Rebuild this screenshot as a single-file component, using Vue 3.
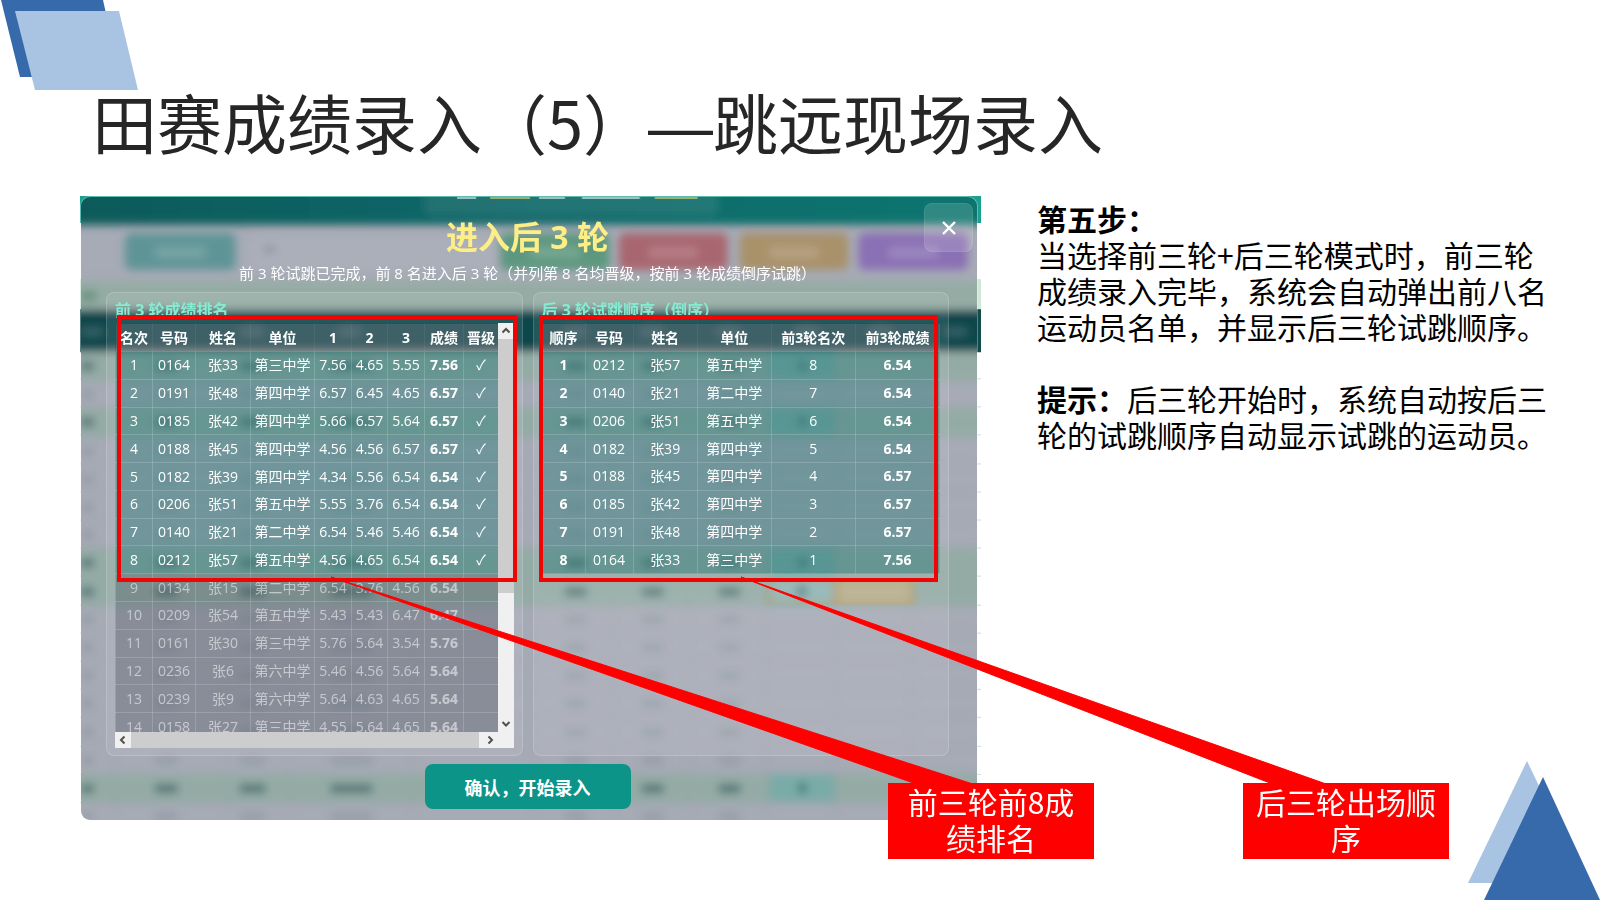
<script setup>
const ranking = [
  [1, '0164', '张33', '第三中学', '7.56', '4.65', '5.55', '7.56'],
  [2, '0191', '张48', '第四中学', '6.57', '6.45', '4.65', '6.57'],
  [3, '0185', '张42', '第四中学', '5.66', '6.57', '5.64', '6.57'],
  [4, '0188', '张45', '第四中学', '4.56', '4.56', '6.57', '6.57'],
  [5, '0182', '张39', '第四中学', '4.34', '5.56', '6.54', '6.54'],
  [6, '0206', '张51', '第五中学', '5.55', '3.76', '6.54', '6.54'],
  [7, '0140', '张21', '第二中学', '6.54', '5.46', '5.46', '6.54'],
  [8, '0212', '张57', '第五中学', '4.56', '4.65', '6.54', '6.54'],
  [9, '0134', '张15', '第二中学', '6.54', '3.76', '4.56', '6.54'],
  [10, '0209', '张54', '第五中学', '5.43', '5.43', '6.47', '6.47'],
  [11, '0161', '张30', '第三中学', '5.76', '5.64', '3.54', '5.76'],
  [12, '0236', '张6', '第六中学', '5.46', '4.56', '5.64', '5.64'],
  [13, '0239', '张9', '第六中学', '5.64', '4.63', '4.65', '5.64'],
  [14, '0158', '张27', '第三中学', '4.55', '5.64', '4.65', '5.64'],
]
const rankHeads = ['名次', '号码', '姓名', '单位', '1', '2', '3', '成绩', '晋级']
const rankCols = [37, 43, 55, 64, 37, 36, 37, 39, 35]

const order = [
  [1, '0212', '张57', '第五中学', 8, '6.54'],
  [2, '0140', '张21', '第二中学', 7, '6.54'],
  [3, '0206', '张51', '第五中学', 6, '6.54'],
  [4, '0182', '张39', '第四中学', 5, '6.54'],
  [5, '0188', '张45', '第四中学', 4, '6.57'],
  [6, '0185', '张42', '第四中学', 3, '6.57'],
  [7, '0191', '张48', '第四中学', 2, '6.57'],
  [8, '0164', '张33', '第三中学', 1, '7.56'],
]
const orderHeads = ['顺序', '号码', '姓名', '单位', '前3轮名次', '前3轮成绩']
const orderCols = [43, 48, 64, 74, 84, 84]

// Score sheet behind the dialog
const sheetRows = Array.from({ length: 17 }, (_, i) => ({
  y: Math.round(155 + i * 28.2),
  strong: [0, 2, 7, 8, 15].includes(i),
}))
const toolbar = [
  { x: 44, w: 111, fill: '#5f9496' },
  { x: 420, w: 110, fill: '#5d977f' },
  { x: 539, w: 109, fill: '#a8666f' },
  { x: 660, w: 109, fill: '#a9916b' },
  { x: 779, w: 110, fill: '#8a70b4' },
]
const marks = [
  { x: 0, w: 13 }, { x: 74, w: 23 }, { x: 159, w: 26 }, { x: 250, w: 42 },
  { x: 485, w: 22 }, { x: 562, w: 22 }, { x: 639, w: 22 },
]
</script>

<template>
  <main class="slide">
    <svg class="corner-top" width="140" height="92" viewBox="0 0 140 92" aria-hidden="true">
      <path d="M1 0H103L120 77H20Z" fill="#376aab" />
      <path d="M15 11H119L138 90H35Z" fill="#a9c3e2" />
    </svg>
    <svg class="corner-bottom" width="134" height="140" viewBox="0 0 134 140" aria-hidden="true">
      <path d="M61 1L120 123H2Z" fill="#a9c3e2" />
      <path d="M77 17L134 140H18Z" fill="#376aab" />
    </svg>

    <h1>田赛成绩录入（5）<span class="dash">—</span>跳远现场录入</h1>

    <div class="content">
      <div class="shot">
        <svg class="edge" viewBox="0 0 901 624" preserveAspectRatio="none" aria-hidden="true">
          <rect width="901" height="27" fill="#1a9f90" />
          <rect y="83" width="901" height="30" fill="#cfe6d9" />
          <rect y="113" width="901" height="43" fill="#124b4c" />
          <rect v-for="r in sheetRows" :key="r.y" :y="r.y + 27" width="901" height="1" fill="#d5dadb" />
        </svg>

        <section class="dialog" role="dialog" aria-labelledby="dlg-title">
          <svg class="backdrop" viewBox="0 0 898 624" preserveAspectRatio="none" aria-hidden="true">
            <defs>
              <linearGradient id="bar" x1="0" x2="1">
                <stop offset="0" stop-color="#115a5b" />
                <stop offset="0.5" stop-color="#12696a" />
                <stop offset="1" stop-color="#11766f" />
              </linearGradient>
              <filter id="soft" x="-5%" y="-5%" width="110%" height="110%"><feGaussianBlur stdDeviation="4" /></filter>
            </defs>
            <rect width="898" height="624" fill="#a7abb6" />
            <g filter="url(#soft)">
              <rect x="-20" y="-20" width="940" height="48" fill="url(#bar)" />
              <rect x="344" y="-20" width="294" height="38" rx="6" fill="#ffffff" opacity="0.08" />
              <rect x="-20" y="84" width="940" height="29" fill="#94aca4" />
              <rect x="0" y="94" width="15" height="10" fill="#6b9080" />
              <rect x="168" y="39" width="247" height="35" rx="6" fill="#abafba" />
              <rect x="183" y="50" width="12" height="5" fill="#868c98" />
              <g v-for="b in toolbar" :key="b.x">
                <rect :x="b.x" y="36" :width="b.w" height="37" rx="6" :fill="b.fill" />
                <rect :x="b.x + 30" y="50" :width="b.w - 60" height="11" fill="#ffffff" opacity="0.16" />
              </g>
              <rect x="-20" y="113" width="940" height="42" fill="#11474c" />
              <g v-for="x in [0, 160, 258, 484, 561, 638, 716, 790, 866]" :key="x">
                <rect :x="x" y="131" width="22" height="8" fill="#a9bcc0" opacity="0.25" />
              </g>
              <g v-for="r in sheetRows" :key="r.y">
                <rect v-if="r.strong" x="-20" :y="r.y" width="940" height="29" fill="#94aba5" />
                <rect :y="r.y + 27" width="898" height="1" fill="#8f949f" opacity="0.4" />
                <rect
                  v-for="m in marks" :key="m.x"
                  :x="m.x" :y="r.y + 10" :width="m.w" height="9"
                  :fill="r.strong ? '#3f666a' : '#7f8b94'"
                  :opacity="r.strong ? 0.75 : 0.4"
                />
                <template v-if="r.strong">
                  <rect x="690" :y="r.y" width="65" height="27" fill="#79aba7" />
                  <rect x="719" :y="r.y + 9" width="8" height="10" fill="#43797a" />
                </template>
              </g>
              <rect v-for="x in [32, 145, 208, 332, 454, 532, 608, 687, 755, 832]" :key="x" :x="x" y="155" width="1" height="470" fill="#8f949f" opacity="0.4" />
            </g>
            <g filter="url(#soft)">
              <rect x="690" y="382" width="66" height="26" fill="#90b3b4" stroke="#b3924e" stroke-width="3" />
              <rect x="718" y="390" width="9" height="10" fill="#43797a" />
              <rect x="757" y="382" width="76" height="26" fill="#b6ae8c" stroke="#b3924e" stroke-width="3" />
            </g>
            <g opacity="0.7">
              <rect x="377" width="19" height="2" fill="#cfe0e0" />
              <rect x="410" width="40" height="2" fill="#c9c971" />
              <rect x="459" width="26" height="2" fill="#cfe0e0" />
              <rect x="502" width="58" height="2" fill="#cfe0e0" />
              <rect x="575" width="43" height="2" fill="#c9c971" />
            </g>
          </svg>

          <button class="close" type="button" aria-label="关闭">
            <svg width="14" height="14" viewBox="0 0 14 14"><path d="M1 1L13 13M13 1L1 13" stroke="#fff" stroke-width="2.400" /></svg>
          </button>

          <h2 id="dlg-title">进入后 3 轮</h2>
          <p class="sub">前 3 轮试跳已完成，前 8 名进入后 3 轮（并列第 8 名均晋级，按前 3 轮成绩倒序试跳）</p>

          <div class="cards">
            <article class="card">
              <h3>前 3 轮成绩排名</h3>
              <div class="scroller">
                <div class="view">
                  <table class="rank">
                    <colgroup><col v-for="(w, i) in rankCols" :key="i" :style="{ width: w + 'px' }" /></colgroup>
                    <thead><tr><th v-for="h in rankHeads" :key="h">{{ h }}</th></tr></thead>
                    <tbody>
                      <tr v-for="r in ranking" :key="r[0]" :class="r[0] <= 8 ? 'pass' : 'out'">
                        <td v-for="(c, i) in r" :key="i" :class="{ strong: i === 7 }">{{ c }}</td>
                        <td>{{ r[0] <= 8 ? '✓' : '' }}</td>
                      </tr>
                    </tbody>
                  </table>
                </div>
                <div class="vbar" aria-hidden="true">
                  <svg width="16" height="16" viewBox="0 0 16 16"><path d="M4.500 9.500L8 6L11.500 9.500" /></svg>
                  <span class="vthumb"></span>
                  <svg width="16" height="16" viewBox="0 0 16 16"><path d="M4.500 6L8 9.500L11.500 6" /></svg>
                </div>
                <div class="hbar" aria-hidden="true">
                  <svg width="16" height="16" viewBox="0 0 16 16"><path d="M9.500 4.500L6 8L9.500 11.500" /></svg>
                  <span class="hthumb"></span>
                  <svg width="19" height="16" viewBox="0 0 19 16"><path d="M9.500 4.500L13 8L9.500 11.500" /></svg>
                </div>
                <div class="junction"></div>
              </div>
            </article>

            <article class="card">
              <h3>后 3 轮试跳顺序（倒序）</h3>
              <table class="order">
                <colgroup><col v-for="(w, i) in orderCols" :key="i" :style="{ width: w + 'px' }" /></colgroup>
                <thead><tr><th v-for="h in orderHeads" :key="h">{{ h }}</th></tr></thead>
                <tbody>
                  <tr v-for="r in order" :key="r[0]" class="pass">
                    <td v-for="(c, i) in r" :key="i" :class="{ strong: i === 0 || i === 5 }">{{ c }}</td>
                  </tr>
                </tbody>
              </table>
            </article>
          </div>

          <button class="confirm" type="button">确认，开始录入</button>
        </section>

        <div class="frame frame-left"></div>
        <div class="frame frame-right"></div>
        <svg class="pointers" width="1300" height="600" viewBox="0 0 1300 600" aria-hidden="true">
          <path d="M251 381L839 589H896Z" />
          <path d="M661 381L1195 589H1249Z" />
        </svg>
        <p class="label label-left">前三轮前8成绩排名</p>
        <p class="label label-right">后三轮出场顺序</p>
      </div>

      <aside class="notes">
        <p><strong>第五步：</strong></p>
        <p>当选择前三轮+后三轮模式时，前三轮成绩录入完毕，系统会自动弹出前八名运动员名单，并显示后三轮试跳顺序。</p>
        <p class="tip"><strong>提示：</strong>后三轮开始时，系统自动按后三轮的试跳顺序自动显示试跳的运动员。</p>
      </aside>
    </div>
  </main>
</template>

<style>
body {
  margin: 0;
  background: #fff;
}
</style>

<style scoped>
.slide {
  position: relative;
  box-sizing: border-box;
  min-height: 100vh;
  padding: 74px 45px 40px 80px;
  overflow: hidden;
  background: #fff;
  color: #000;
  font-family: "Open Sans", "Noto Sans CJK SC", sans-serif;
}
h1, h2, h3, p {
  margin: 0;
}
.corner-top {
  position: absolute;
  left: 0;
  top: 0;
}
.corner-bottom {
  position: absolute;
  right: 0;
  bottom: 0;
}
h1 {
  position: relative;
  padding-left: 12px;
  margin-bottom: 28px;
  font-family: "Noto Sans CJK SC", sans-serif;
  font-size: 65px;
  line-height: 94px;
  font-weight: 400;
  color: #262626;
  white-space: nowrap;
}
.dash {
  font-family: "Liberation Sans", sans-serif;
  line-height: 1;
}
.content {
  display: grid;
  grid-template-columns: 901fr 518fr;
  gap: 56px;
  align-items: start;
}
.shot {
  position: relative;
  padding-right: 3px;
}
.edge {
  position: absolute;
  inset: 0;
  width: 100%;
  height: 100%;
}
.dialog {
  position: relative;
  box-sizing: border-box;
  padding: 20px 28px 11px 25px;
  border: 1px solid rgba(255, 255, 255, 0.3);
  border-radius: 10px;
  overflow: hidden;
  color: #fff;
  text-align: center;
}
.backdrop {
  position: absolute;
  inset: 0;
  width: 100%;
  height: 100%;
}
.close {
  position: absolute;
  top: 6px;
  right: 4px;
  width: 49px;
  height: 49px;
  display: flex;
  align-items: center;
  justify-content: center;
  padding: 0;
  border: 1px solid rgba(255, 255, 255, 0.08);
  border-radius: 8px;
  background: rgba(255, 255, 255, 0.14);
}
h2 {
  position: relative;
  font-size: 32px;
  line-height: 40px;
  color: #fdee86;
}
.sub {
  position: relative;
  margin-top: 4px;
  font-size: 15px;
  line-height: 24px;
  white-space: nowrap;
}
.cards {
  position: relative;
  display: grid;
  grid-template-columns: 1fr 1fr;
  gap: 10px;
  margin-top: 7px;
}
.card {
  box-sizing: border-box;
  min-height: 464px;
  padding: 7px 8px;
  border: 1px solid rgba(255, 255, 255, 0.16);
  border-radius: 8px;
  background: rgba(255, 255, 255, 0.09);
  text-align: left;
}
h3 {
  font-size: 16px;
  line-height: 20px;
  margin-bottom: 3px;
  color: #84ecd2;
}
.scroller {
  display: grid;
  grid-template-columns: 1fr 16px;
  grid-template-rows: 409px 16px;
}
.view {
  overflow: hidden;
}
table {
  width: 100%;
  table-layout: fixed;
  border-collapse: collapse;
  background: rgba(15, 23, 42, 0.24);
  font-size: 14px;
  line-height: 20px;
  text-align: center;
}
.rank {
  height: 418px;
}
.order {
  height: 251px;
}
th, td {
  box-sizing: border-box;
  height: 27px;
  padding: 0;
  border: 1px solid rgba(255, 255, 255, 0.16);
  white-space: nowrap;
}
th {
  height: 28px;
  background: rgba(255, 255, 255, 0.14);
  border-color: rgba(255, 255, 255, 0.05);
}
.pass {
  background: rgba(20, 184, 166, 0.2);
}
.out {
  color: rgba(255, 255, 255, 0.52);
}
.strong {
  font-weight: 700;
}
.vbar, .hbar {
  display: flex;
  background: #f0f0f0;
}
.vbar {
  flex-direction: column;
}
.vbar svg:last-child {
  margin-top: auto;
}
.vthumb {
  height: 254px;
  background: #cdcdcd;
}
.hthumb {
  flex: 1;
  background: #cdcdcd;
}
.vbar path, .hbar path {
  fill: none;
  stroke: #505050;
  stroke-width: 2;
}
.junction {
  background: #f0f0f0;
}
.confirm {
  position: relative;
  height: 45px;
  margin-top: 8px;
  padding: 0 40px;
  border: 0;
  border-radius: 8px;
  background: #0d9488;
  color: #fff;
  font-family: inherit;
  font-size: 18px;
  font-weight: 700;
  vertical-align: top;
}
.frame {
  position: absolute;
  top: 119px;
  box-sizing: border-box;
  height: 267px;
  border: 4px solid #f00505;
}
.frame-left {
  left: 37px;
  width: 400px;
}
.frame-right {
  left: 459px;
  width: 399px;
}
.pointers {
  position: absolute;
  left: 0;
  top: 0;
  pointer-events: none;
}
.pointers path {
  fill: #f00;
  stroke: #f00;
  stroke-width: 1;
}
.label {
  position: absolute;
  top: 587px;
  box-sizing: border-box;
  width: 206px;
  padding: 0 10px 4px;
  background: #f00;
  color: #fff;
  font-family: "Noto Sans CJK SC", sans-serif;
  font-size: 30px;
  line-height: 36px;
  text-align: center;
}
.label-left {
  left: 808px;
}
.label-right {
  left: 1163px;
}
.notes {
  padding-top: 4px;
  font-family: "Noto Sans CJK SC", sans-serif;
  font-size: 30px;
  line-height: 36px;
}
.tip {
  margin-top: 36px;
}
</style>
